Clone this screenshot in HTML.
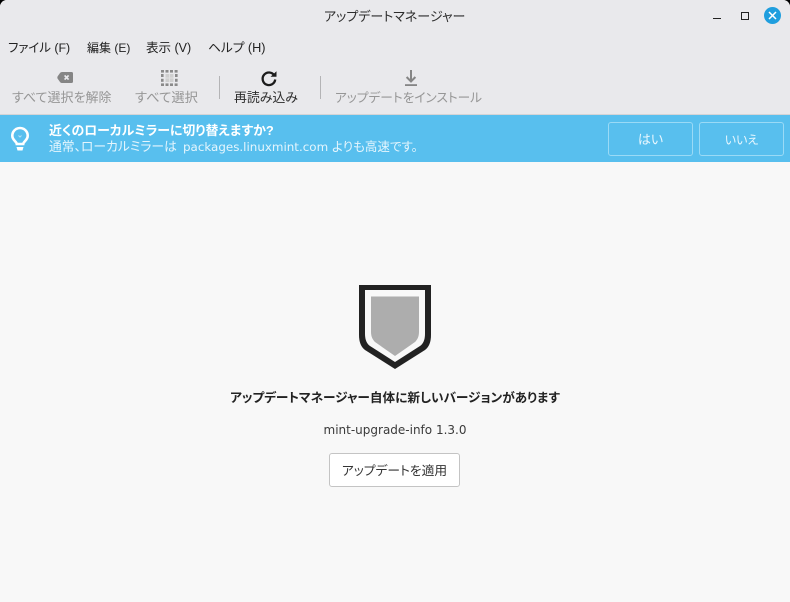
<!DOCTYPE html>
<html lang="ja"><head><meta charset="utf-8"><style>
html,body{margin:0;padding:0;background:#000}
#w{position:relative;width:790px;height:602px;overflow:hidden;background:#f8f8f8;border-radius:7px 7px 0 0;font-family:"DejaVu Sans","Noto Sans CJK JP",sans-serif;font-size:12px;color:#2e2e2e}
.t{position:absolute;white-space:nowrap;line-height:16px;font-family:"Liberation Sans","Noto Sans CJK JP",sans-serif;font-feature-settings:"palt"}
.d{color:#969696}
svg{position:absolute;overflow:visible}
.b{position:absolute;box-sizing:border-box;border-radius:3px}
</style></head><body><div id="w">
<div style="position:absolute;left:0;top:0;width:790px;height:115px;background:#e9e9ec"></div>
<div style="position:absolute;left:0;top:114px;width:790px;height:1px;background:#d4d4d6"></div>
<div style="position:absolute;left:0;top:115px;width:790px;height:47px;background:#58bfee"></div>

<span class="t" style="left:324px;top:9px;font-size:13px;color:#2c2c2c">アップデートマネージャー</span>
<div style="position:absolute;left:713px;top:18px;width:8px;height:1.4px;background:#222"></div>
<div style="position:absolute;left:741px;top:12px;width:8px;height:8px;box-sizing:border-box;border:1.4px solid #222"></div>
<div style="position:absolute;left:764px;top:7px;width:17px;height:17px;border-radius:50%;background:#1f9ede"></div>
<svg style="left:764px;top:7px" width="17" height="17"><path d="M5 5L12 12M12 5L5 12" stroke="#fff" stroke-width="1.5"/></svg>

<span class="t" style="left:8px;top:40px;font-size:12.4px;color:#222">ファイル (F)</span>
<span class="t" style="left:87px;top:40px;color:#222">編集 (E)</span>
<span class="t" style="left:146px;top:40px;font-size:12.5px;color:#222">表示 (V)</span>
<span class="t" style="left:208px;top:40px;font-size:12.7px;color:#222">ヘルプ (H)</span>

<svg style="left:57px;top:72px" width="16" height="11"><path d="M5 0H14.5Q16 0 16 1.5V9.5Q16 11 14.5 11H5Q4 11 3.2 10.2L0.6 6.6Q0 5.5 0.6 4.4L3.2 0.8Q4 0 5 0Z" fill="#858585"/><path d="M7.6 3.4L11.6 7.6M11.6 3.4L7.6 7.6" stroke="#e9e9ec" stroke-width="1.7"/></svg>
<span class="t d" style="left:12px;top:90px;font-size:13px">すべて選択を解除</span>

<svg style="left:161px;top:70px" width="17" height="16"><g fill="#8a8a8a"><rect width="3" height="2.6"/><rect x="4.5" width="3" height="2.6"/><rect x="9" width="3" height="2.6"/><rect x="13.6" width="3" height="2.6"/><rect y="13.4" width="3" height="2.6"/><rect x="4.5" y="13.4" width="3" height="2.6"/><rect x="9" y="13.4" width="3" height="2.6"/><rect x="13.6" y="13.4" width="3" height="2.6"/><rect y="4" width="2.6" height="3"/><rect y="8.8" width="2.6" height="3"/><rect x="14" y="4" width="2.6" height="3"/><rect x="14" y="8.8" width="2.6" height="3"/></g><rect x="4.5" y="4" width="8" height="8" fill="#cfcfcf"/><path d="M8.5 4V12M4.5 8H12.5" stroke="#e0e0e0" stroke-width="1"/></svg>
<span class="t d" style="left:135px;top:90px;font-size:13.3px">すべて選択</span>

<div style="position:absolute;left:219px;top:76px;width:1px;height:23px;background:#b4b4b6"></div>
<svg style="left:261px;top:71px" width="16" height="16"><path d="M13.3 4.5A6.3 6.3 0 1 0 14.2 8.5" fill="none" stroke="#1c1c1c" stroke-width="2.3"/><path d="M9.5 5.8H15.5V0.2Z" fill="#1c1c1c"/></svg>
<span class="t" style="left:234px;top:90px;font-size:12.9px;color:#2c2c2c">再読み込み</span>

<div style="position:absolute;left:320px;top:76px;width:1px;height:23px;background:#b4b4b6"></div>
<svg style="left:405px;top:70px" width="12" height="16"><path d="M6 0V11.5M1.6 7L6 11.5L10.4 7" fill="none" stroke="#858585" stroke-width="2"/><rect x="0" y="14.2" width="12" height="1.8" fill="#858585"/></svg>
<span class="t d" style="left:335px;top:90px;font-size:12.7px">アップデートをインストール</span>

<svg style="left:11px;top:127px" width="18" height="24"><path d="M5.8 17C5.6 14.5 1.3 13 1.3 8.7A7.7 7.7 0 0 1 16.7 8.7C16.7 13 12.4 14.5 12.2 17Z" fill="none" stroke="#fff" stroke-width="2.6"/><path d="M5.5 20H12.5L11.5 23.5H6.5Z" fill="#fff"/><path d="M7.5 8.5L9 10L10.5 8.5" fill="none" stroke="#b5e2f7" stroke-width="1"/></svg>
<span class="t" style="left:49px;top:123px;font-weight:bold;color:#fff;font-size:12.9px">近くのローカルミラーに切り替えますか?</span>
<span class="t" style="left:49px;top:139px;color:#e4f5fd;font-size:12.8px">通常、ローカルミラーは</span>
<span class="t" style="left:183px;top:139px;color:#e4f5fd;font-family:'DejaVu Sans',sans-serif;font-size:11.9px">packages.linuxmint.com</span>
<span class="t" style="left:332px;top:139px;color:#e4f5fd;font-size:12.5px">よりも高速です。</span>

<div class="b" style="left:608px;top:122px;width:85px;height:34px;border:1px solid #9adaf6"></div>
<span class="t" style="left:608px;width:85px;text-align:center;top:132px;color:#e8f7fe;font-size:13px">はい</span>
<div class="b" style="left:699px;top:122px;width:85px;height:34px;border:1px solid #9adaf6"></div>
<span class="t" style="left:699px;width:85px;text-align:center;top:132px;color:#e8f7fe">いいえ</span>

<svg style="left:359px;top:285px" width="72" height="84"><path d="M0 0H72V50C72 57 70 62 66 65L36 84L6 65C2 62 0 57 0 50Z" fill="#222"/><path d="M6 5H66V49C66 55 64 59 61 61L36 77L11 61C8 59 6 55 6 49Z" fill="#f8f8f8"/><path d="M12 11.5H60V47C60 52 58 55 56 57L36 71L16 57C14 55 12 52 12 47Z" fill="#adadad"/></svg>

<span class="t" style="left:0;width:790px;text-align:center;top:390px;font-weight:bold;color:#222;font-size:12.65px">アップデートマネージャー自体に新しいバージョンがあります</span>
<span class="t" style="left:0;width:790px;text-align:center;top:422px;color:#3a3a3a;font-family:'DejaVu Sans',sans-serif;font-size:12px">mint-upgrade-info 1.3.0</span>
<div class="b" style="left:329px;top:453px;width:131px;height:34px;background:#fff;border:1px solid #c4c4c4"></div>
<span class="t" style="left:329px;width:131px;text-align:center;top:463px;color:#333;font-size:12.75px">アップデートを適用</span>
</div></body></html>
